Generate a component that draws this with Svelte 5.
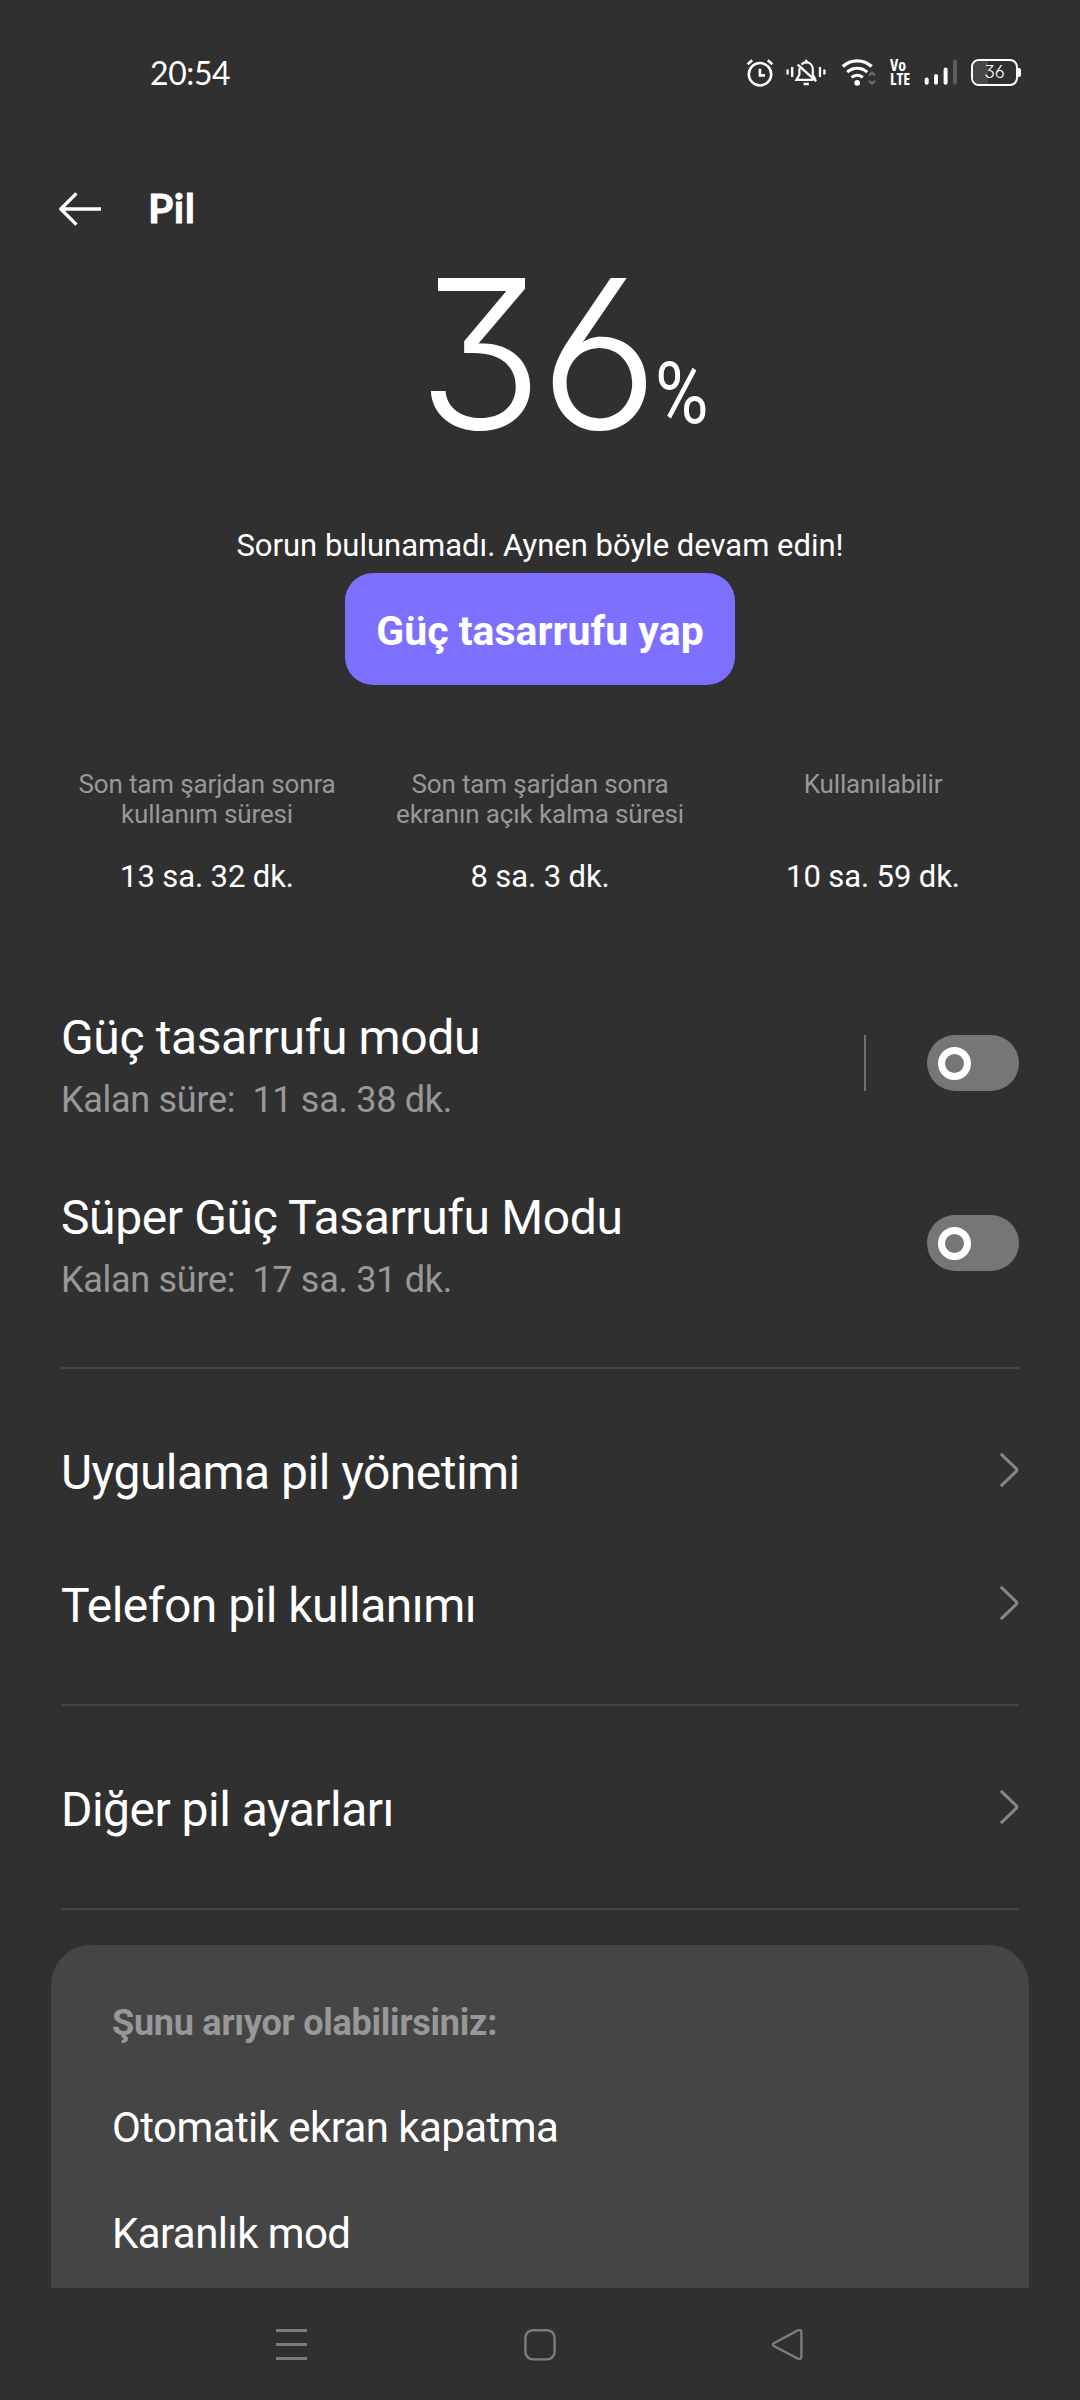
<script lang="ts">
    let level = 36;

    const stats = [
        { label: ["Son tam şarjdan sonra", "kullanım süresi"], value: "13 sa. 32 dk." },
        { label: ["Son tam şarjdan sonra", "ekranın açık kalma süresi"], value: "8 sa. 3 dk." },
        { label: ["Kullanılabilir"], value: "10 sa. 59 dk." },
    ];

    let modes = [
        { title: "Güç tasarrufu modu", left: "11 sa. 38 dk.", on: false, split: true },
        { title: "Süper Güç Tasarrufu Modu", left: "17 sa. 31 dk.", on: false, split: false },
    ];

    const groups = [
        ["Uygulama pil yönetimi", "Telefon pil kullanımı"],
        ["Diğer pil ayarları"],
    ];

    const suggestions = ["Otomatik ekran kapatma", "Karanlık mod"];

    function toggle(i: number) {
        modes[i].on = !modes[i].on;
    }
</script>

<div class="screen">
    <div class="status">
        <span class="clock">20:54</span>
        <div class="status-icons">
            <!-- alarm -->
            <svg class="alarm" width="28" height="30" viewBox="0 0 28 30" fill="none" stroke="#fff">
                <circle cx="14" cy="16.2" r="11.2" stroke-width="2.5" />
                <path d="M1.6 6.2 6.2 2.2M26.4 6.2 21.8 2.2" stroke-width="2.6" />
                <path d="M13.9 10.8v6.6h5" stroke-width="2.6" />
            </svg>
            <!-- muted bell with vibration -->
            <svg class="bell" width="40" height="30" viewBox="0 0 40 30" fill="none" stroke="#fff" stroke-width="2.2">
                <path d="M1.6 11.5v5M6.2 9v10M34 9v10M38.4 11.5v5" stroke-width="2.3" />
                <path d="M15.5 6.5C16.8 5 18.3 4.4 20.2 4.4c4 0 6.6 3 6.6 7v5.4l2.6 4.4" />
                <path d="M13.4 10.2v6.6l-3 5h16.8" />
                <path d="M11.6 6.6 30.2 23.2" stroke-width="2.4" />
                <path d="M20.2 1.8v2.4M17.6 26h5.2" stroke-width="2.4" />
            </svg>
            <!-- wifi -->
            <svg class="wifi" width="36" height="30" viewBox="0 0 36 30" fill="none" stroke="#fff">
                <path d="M1.8 8.6a21 21 0 0 1 28.8 0" stroke-width="3.4" />
                <path d="M6.2 14.2a14.6 14.6 0 0 1 20 0" stroke-width="3.2" />
                <path d="M10.6 19.4a8.4 8.4 0 0 1 11.2 0" stroke-width="3.2" />
                <circle cx="16.2" cy="24.8" r="2.9" fill="#fff" stroke="none" />
                <path d="m28 17.6 3-3 3 3M28 22.6l3 3 3-3" stroke="#686868" stroke-width="2.2" />
            </svg>
            <span class="volte">Vo LTE</span>
            <!-- signal -->
            <svg class="signal" width="34" height="30" viewBox="0 0 34 30" stroke="#fff" stroke-width="4" stroke-linecap="round">
                <path d="M2.7 21.5v3.2M12 18v6.7M21.6 11.4v13.3" />
                <path d="M31 3.4v21.3" stroke="#5c5c5c" />
            </svg>
            <span class="battery">
                <span class="fill" style="width: {level}%"></span>
                <span class="num">{level}</span>
            </span>
            <span class="cap"></span>
        </div>
    </div>

    <header>
        <svg width="44" height="36" viewBox="0 0 44 36" fill="none" stroke="#fff" stroke-width="3.4" stroke-linejoin="round">
            <path d="M18.4 2.4 2.8 18l15.6 15.6M2.8 18H43" />
        </svg>
        <h1>Pil</h1>
    </header>

    <section class="hero">
        <div class="level">
            <span class="digits">{level}</span><span class="percent">%</span>
        </div>
        <p>Sorun bulunamadı. Aynen böyle devam edin!</p>
        <button class="save">Güç tasarrufu yap</button>
    </section>

    <section class="stats">
        {#each stats as stat}
            <div class="stat">
                <div class="label">
                    {#each stat.label as line}
                        <span>{line}</span>
                    {/each}
                </div>
                <div class="value">{stat.value}</div>
            </div>
        {/each}
    </section>

    {#each modes as mode, i}
        <div class="mode">
            <div class="mode-text">
                <h2>{mode.title}</h2>
                <p>Kalan süre:&nbsp; {mode.left}</p>
            </div>
            {#if mode.split}
                <span class="split"></span>
            {/if}
            <button
                class="switch"
                class:on={mode.on}
                aria-label={mode.title}
                onclick={() => toggle(i)}
            ><span class="knob"></span></button>
        </div>
    {/each}

    <div class="divider"></div>

    {#each groups as group}
        <div class="group">
            {#each group as item}
                <div class="link">
                    <h2>{item}</h2>
                    <svg width="20" height="36" viewBox="0 0 20 36" fill="none" stroke="#858585" stroke-width="3" stroke-linejoin="round">
                        <path d="M1.8 1.8 17.2 16.6q1.5 1.4 0 2.8L1.8 34.2" />
                    </svg>
                </div>
            {/each}
        </div>
        <div class="divider"></div>
    {/each}

    <section class="card">
        <h3>Şunu arıyor olabilirsiniz:</h3>
        {#each suggestions as s}
            <div class="suggestion">{s}</div>
        {/each}
    </section>

    <nav>
        <svg width="32" height="32" viewBox="0 0 32 32" stroke="#7c7c7c" stroke-width="3">
            <path d="M0 1.5h31M0 15.5h31M0 29.5h31" />
        </svg>
        <svg width="32" height="32" viewBox="0 0 32 32" fill="none" stroke="#7c7c7c" stroke-width="2.4">
            <rect x="1.4" y="1.2" width="29.2" height="29.2" rx="7.5" />
        </svg>
        <svg width="32" height="32" viewBox="0 0 32 32" fill="none" stroke="#7c7c7c" stroke-width="2.4" stroke-linejoin="round">
            <path d="M2.8 14.2 26.8 1.4q3.4-1.2 3.6 1.6v25q-.2 2.8-3.6 1.6L2.8 17q-1.6-1.4 0-2.8Z" />
        </svg>
    </nav>
</div>

<style>
    :global(body) {
        margin: 0;
        background: #303030;
    }

    .screen {
        width: 1080px;
        height: 2400px;
        display: flex;
        flex-direction: column;
        overflow: hidden;
        background: #303030;
        color: #fff;
        font-family: Roboto, sans-serif;
    }

    h1,
    h2,
    h3,
    p {
        margin: 0;
        font-weight: 400;
    }

    button {
        border: none;
        padding: 0;
        color: inherit;
        font-family: inherit;
    }

    svg {
        display: block;
        flex: none;
    }

    .status {
        height: 145px;
        display: flex;
        align-items: center;
        justify-content: space-between;
        padding: 0 59px 0 150px;
        box-sizing: border-box;
    }

    .clock {
        font-family: Lato, sans-serif;
        font-size: 32px;
        letter-spacing: -0.4px;
    }

    .status-icons {
        display: flex;
        align-items: center;
    }

    .bell {
        margin-left: 12px;
    }

    .wifi {
        margin-left: 15px;
    }

    .volte {
        width: 20px;
        margin-left: 13px;
        padding-bottom: 1px;
        font-family: "Open Sans", sans-serif;
        font-size: 16px;
        font-weight: 700;
        font-stretch: 75%;
        line-height: 14px;
    }

    .signal {
        margin-left: 14px;
    }

    .battery {
        position: relative;
        width: 47px;
        height: 27px;
        margin-left: 13px;
        box-sizing: border-box;
        border: 2.5px solid #fff;
        border-radius: 8px;
        overflow: hidden;
    }

    .fill {
        position: absolute;
        inset: 0 auto 0 0;
        background: #484848;
    }

    .num {
        position: absolute;
        inset: 0;
        text-align: center;
        font: 300 17.5px/22px Inter, sans-serif;
        font-feature-settings: "cv03", "cv09";
    }

    .cap {
        width: 3px;
        height: 9px;
        border-radius: 0 2px 2px 0;
        background: #fff;
    }

    header {
        height: 127px;
        display: flex;
        align-items: center;
        gap: 46px;
        padding-left: 58px;
    }

    h1 {
        padding-bottom: 2px;
        font-family: Lato, sans-serif;
        font-size: 41px;
        font-weight: 700;
        line-height: 50px;
        letter-spacing: 0.5px;
        -webkit-text-stroke: 0.8px #fff;
    }

    .hero {
        display: flex;
        flex-direction: column;
        align-items: center;
    }

    .level {
        display: flex;
        align-items: baseline;
        align-self: flex-start;
        height: 162px;
        margin-left: 417px;
    }

    .digits {
        font-family: Inter, sans-serif;
        font-size: 208px;
        font-weight: 300;
        line-height: 162px;
        letter-spacing: -4px;
        font-feature-settings: "cv03", "cv09";
    }

    .percent {
        font-size: 86px;
        line-height: 80px;
        transform: translateY(-6px) scaleX(0.85);
        transform-origin: left;
    }

    .hero p {
        margin-top: 92px;
        font-size: 31px;
        line-height: 40px;
    }

    .save {
        width: 390px;
        height: 112px;
        margin-top: 7px;
        padding-top: 3px;
        border-radius: 28px;
        background: #7e70ff;
        font-size: 41px;
        font-weight: 700;
    }

    .stats {
        display: grid;
        grid-template-columns: repeat(3, 333px);
        justify-content: center;
        margin-top: 84px;
        text-align: center;
    }

    .label {
        display: flex;
        flex-direction: column;
        height: 60px;
        color: #989898;
        font-size: 26px;
        line-height: 30px;
        letter-spacing: -0.15px;
    }

    .value {
        margin-top: 28px;
        font-size: 31px;
        line-height: 40px;
        letter-spacing: -0.1px;
    }

    .mode {
        display: flex;
        align-items: center;
        height: 180px;
        padding: 0 61px;
    }

    .stats + .mode {
        margin-top: 76px;
    }

    h2 {
        font-size: 48px;
        line-height: 56px;
        letter-spacing: -0.38px;
    }

    .mode-text {
        flex: 1;
        padding-top: 6px;
    }

    .mode-text p {
        margin-top: 12px;
        color: #989898;
        font-size: 36px;
        line-height: 44px;
        letter-spacing: -0.3px;
    }

    .split {
        width: 2px;
        height: 56px;
        margin-right: 61px;
        background: #6f6f6f;
    }

    .switch {
        display: flex;
        align-items: center;
        width: 92px;
        height: 56px;
        padding: 0 11px;
        border-radius: 28px;
        background: #767676;
    }

    .switch.on {
        justify-content: flex-end;
        background: #7e70ff;
    }

    .knob {
        width: 33px;
        height: 33px;
        box-sizing: border-box;
        border: 7px solid #fff;
        border-radius: 50%;
    }

    .divider {
        flex: none;
        height: 2px;
        margin: 34px 61px;
        background: #454545;
    }

    .group {
        padding-bottom: 1px;
    }

    .link {
        display: flex;
        align-items: center;
        justify-content: space-between;
        height: 133px;
        padding: 0 61px;
    }

    .link h2 {
        padding-top: 6px;
        letter-spacing: -0.53px;
    }

    .card {
        flex: none;
        height: 343px;
        margin: 1px 51px 0;
        padding: 55px 61px 0;
        box-sizing: border-box;
        border-radius: 40px 40px 0 0;
        background: #454545;
    }

    h3 {
        margin-bottom: 29px;
        color: #989898;
        font-size: 36px;
        font-weight: 700;
        line-height: 46px;
        letter-spacing: -0.25px;
    }

    .suggestion {
        font-size: 42px;
        line-height: 106px;
        letter-spacing: -0.58px;
    }

    nav {
        display: flex;
        align-items: center;
        justify-content: space-between;
        height: 112px;
        padding: 1px 277px 0 276px;
        box-sizing: border-box;
    }
</style>
